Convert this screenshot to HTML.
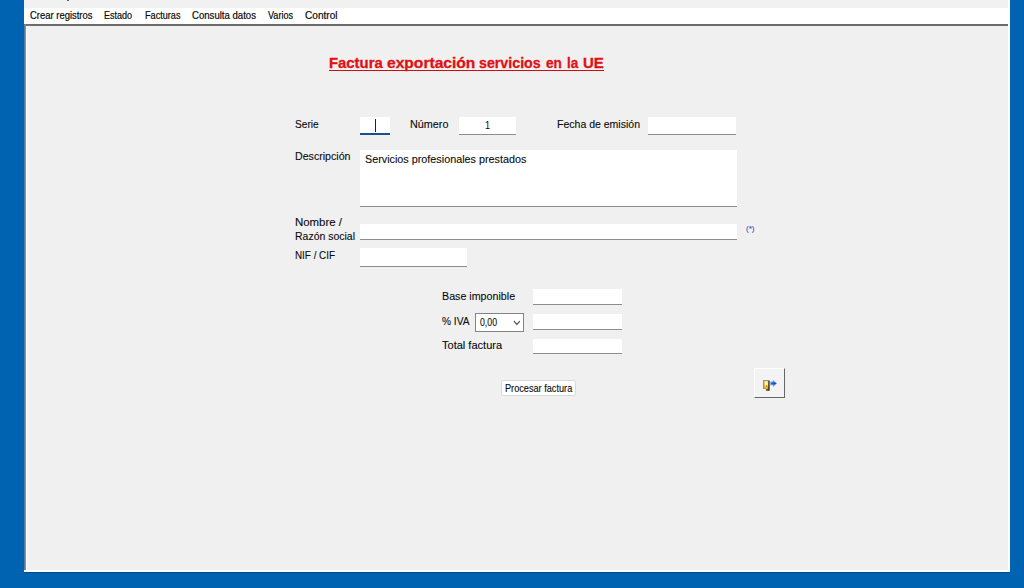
<!DOCTYPE html>
<html lang="es">
<head>
<meta charset="utf-8">
<title>Factura exportación servicios en la UE</title>
<style>
html,body{margin:0;padding:0;}
body{width:1024px;height:588px;overflow:hidden;background:#0063b1;position:relative;font-family:"Liberation Sans",sans-serif;color:#111;}
.abs{position:absolute;}
#win{left:24px;top:0;width:986px;height:571.6px;background:#f0f0f0;}
#strip{left:0;top:0;width:986px;height:8px;background:#f1f1f1;}
#menubar{left:0;top:8px;width:986px;height:16px;background:#fff;}
#menubar span{position:absolute;top:0;line-height:16px;font-size:11px;white-space:nowrap;color:#111;}
#topline{left:0;top:24.1px;width:984px;height:1.5px;background:#6c6c6c;}
#leftline{left:0;top:24px;width:1.7px;height:546.5px;background:linear-gradient(to right,#3d74a8 0%,#8a8a8a 70%,#909090 100%);}
#leftwhite{left:1.7px;top:25.5px;width:1.5px;height:544px;background:#fdfdfb;box-shadow:2px 0 2px #f5f5f8;}
#botwhite{left:0;top:569.8px;width:986px;height:1.8px;background:#fff;}
#rightwhite{left:984.4px;top:0;width:1.6px;height:571.6px;background:#fff;}
#botdark{left:0;top:571.6px;width:986px;height:1.1px;background:#004c8e;}
.lbl{position:absolute;font-size:11px;line-height:14px;white-space:nowrap;color:#111;}
.inp{position:absolute;background:#fff;border-bottom:1.5px solid #8c8c8c;box-sizing:border-box;}
.t{position:absolute;white-space:nowrap;color:#0a0a0a;transform-origin:0 50%;-webkit-text-stroke:0.1px #0a0a0a;}
</style>
</head>
<body>
<div id="win" class="abs">
  <div id="strip" class="abs"></div>
  <div class="abs" style="left:43.4px;top:0;width:1.4px;height:1.3px;background:#333;border-radius:0 0 1px 1px"></div>
  <div id="menubar" class="abs">
  </div>
  <div id="topline" class="abs"></div>
  <div id="leftline" class="abs"></div>
  <div id="leftwhite" class="abs"></div>
  <div id="botwhite" class="abs"></div>
  <div id="rightwhite" class="abs"></div>
  <div id="botdark" class="abs"></div>

  
  <div class="inp" id="i_serie" style="left:336.1px;top:116.5px;width:30.1px;height:18.5px;border-bottom:2px solid #1c4f90"></div>
  <div class="abs" id="caret" style="left:350.5px;top:118.7px;width:1.2px;height:13.3px;background:#222"></div>
  <div class="inp" id="i_num" style="left:434.6px;top:116.6px;width:57.4px;height:18.6px"></div>
  <div class="inp" id="i_fecha" style="left:624px;top:116.6px;width:88.2px;height:18.6px"></div>
  <div class="inp" id="i_desc" style="left:336.2px;top:149.6px;width:376.8px;height:57.3px"></div>
  <div class="inp" id="i_nombre" style="left:336.2px;top:224px;width:376.8px;height:15.5px"></div>
  <div class="inp" id="i_nif" style="left:336.2px;top:248px;width:107.3px;height:18.5px"></div>
  <div class="inp" id="i_base" style="left:509.2px;top:289.3px;width:88.9px;height:15.9px"></div>
  <div class="abs" id="sel" style="left:451px;top:313px;width:49px;height:19px;background:#fff;border:1px solid #848484;box-sizing:border-box">
    
    <svg class="abs" style="left:36.8px;top:6px" width="8" height="6" viewBox="0 0 8 6"><path d="M0.9 1.2 L3.9 4.3 L6.9 1.2" fill="none" stroke="#484848" stroke-width="1.15"/></svg>
  </div>
  <div class="inp" id="i_iva" style="left:509.2px;top:313.8px;width:88.9px;height:16.2px"></div>
  <div class="inp" id="i_total" style="left:509.2px;top:338.8px;width:88.9px;height:15.7px"></div>

  <div class="abs" id="btn" style="left:476.7px;top:379.7px;width:75.6px;height:16.3px;background:#fefefe;border:1px solid #d8d8d8;border-radius:2.5px;box-sizing:border-box">
    
  </div>

  <div class="abs" id="ibtn" style="left:729.5px;top:368.3px;width:31.9px;height:30.2px;background:#f3f3f3;box-sizing:border-box;border-top:1.5px solid #fff;border-left:1.5px solid #fff;border-right:1.9px solid #666;border-bottom:1.7px solid #666">
    <svg class="abs" style="left:6.6px;top:9.1px" width="18" height="14" viewBox="0 0 18 14">
      <defs><linearGradient id="dg" x1="0" y1="0" x2="0" y2="1"><stop offset="0" stop-color="#f3e08a"/><stop offset="0.4" stop-color="#f7dc62"/><stop offset="1" stop-color="#d6a01c"/></linearGradient>
      <linearGradient id="ag" x1="0" y1="0" x2="1" y2="0"><stop offset="0" stop-color="#5a94f0"/><stop offset="1" stop-color="#1d54c8"/></linearGradient></defs>
      <path d="M2.2 2.4 L8.7 2.4 L8.7 12.7 L5.2 12.7 L5.2 11.2 L2.2 10.6 Z" fill="#3e3416"/>
      <path d="M2.3 3 L7.2 3 L7.2 11 L5.6 11.4 L2.3 10.4 Z" fill="url(#dg)"/>
      <path d="M2.2 2.6 L3.2 2.6 L3.2 10.7 L2.2 10.5 Z" fill="#a88a2a"/>
      <path d="M4.4 4.4 L6.4 4.4 L6.4 7 L4.4 7 Z" fill="#fffbe6" opacity="0.9"/>
      <path d="M5 7.6 L6.4 7.6 L6.4 9 L5 9 Z" fill="#c8901a"/>
      <path d="M9.3 3.7 L12 3.7 L12 2.2 L15.9 5.4 L12 8.6 L12 7.1 L9.3 7.1 Z" fill="url(#ag)" stroke="#9cc0f5" stroke-width="0.5"/>
      <path d="M10 5.4 L15 5.4" stroke="#1748b0" stroke-width="0.8"/>
    </svg>
  </div>
<div class="abs" id="uline" style="left:304.5px;top:69.75px;width:275.7px;height:1.1px;background:#c81014"></div>
<div class="t" id="m1" style="left:5.50px;top:5.82px;font-size:10.2px;line-height:20.4px;transform:scaleX(0.9276);-webkit-text-stroke:0.2px #0a0a0a;">Crear registros</div>
<div class="t" id="m2" style="left:80.00px;top:5.82px;font-size:10.2px;line-height:20.4px;transform:scaleX(0.8828);-webkit-text-stroke:0.2px #0a0a0a;">Estado</div>
<div class="t" id="m3" style="left:120.50px;top:5.82px;font-size:10.2px;line-height:20.4px;transform:scaleX(0.8955);-webkit-text-stroke:0.2px #0a0a0a;">Facturas</div>
<div class="t" id="m4" style="left:168.00px;top:5.82px;font-size:10.2px;line-height:20.4px;transform:scaleX(0.9416);-webkit-text-stroke:0.2px #0a0a0a;">Consulta datos</div>
<div class="t" id="m5" style="left:244.00px;top:5.82px;font-size:10.2px;line-height:20.4px;transform:scaleX(0.8889);-webkit-text-stroke:0.2px #0a0a0a;">Varios</div>
<div class="t" id="m6" style="left:281.00px;top:5.82px;font-size:10.2px;line-height:20.4px;transform:scaleX(0.9895);-webkit-text-stroke:0.2px #0a0a0a;">Control</div>
<div class="t" id="tw1" style="left:304.60px;top:49.08px;font-size:14.2px;line-height:28.4px;transform:scaleX(1.0478);-webkit-text-stroke:0.3px #e01014;font-weight:bold;color:#e01014;">Factura</div>
<div class="t" id="tw2" style="left:362.70px;top:49.08px;font-size:14.2px;line-height:28.4px;transform:scaleX(1.0992);-webkit-text-stroke:0.3px #e01014;font-weight:bold;color:#e01014;">exportación</div>
<div class="t" id="tw3" style="left:455.30px;top:49.08px;font-size:14.2px;line-height:28.4px;transform:scaleX(1.0027);-webkit-text-stroke:0.3px #e01014;font-weight:bold;color:#e01014;">servicios</div>
<div class="t" id="tw4" style="left:521.60px;top:49.08px;font-size:14.2px;line-height:28.4px;transform:scaleX(0.9600);-webkit-text-stroke:0.3px #e01014;font-weight:bold;color:#e01014;">en</div>
<div class="t" id="tw5" style="left:543.10px;top:49.08px;font-size:14.2px;line-height:28.4px;transform:scaleX(0.9541);-webkit-text-stroke:0.3px #e01014;font-weight:bold;color:#e01014;">la</div>
<div class="t" id="tw6" style="left:559.20px;top:49.08px;font-size:14.2px;line-height:28.4px;transform:scaleX(1.0548);-webkit-text-stroke:0.3px #e01014;font-weight:bold;color:#e01014;">UE</div>
<div class="t" id="l_serie" style="left:270.50px;top:112.69px;font-size:11px;line-height:22px;transform:scaleX(0.9226);">Serie</div>
<div class="t" id="l_num" style="left:385.50px;top:112.69px;font-size:11px;line-height:22px;transform:scaleX(0.9840);">Número</div>
<div class="t" id="t_num" style="left:461.20px;top:116.27px;font-size:10.2px;line-height:20.4px;transform:scaleX(0.8992);-webkit-text-stroke:0;">1</div>
<div class="t" id="l_fecha" style="left:533.00px;top:112.69px;font-size:11px;line-height:22px;transform:scaleX(0.9559);">Fecha de emisión</div>
<div class="t" id="l_desc" style="left:270.50px;top:145.49px;font-size:11px;line-height:22px;transform:scaleX(0.9657);">Descripción</div>
<div class="t" id="t_desc" style="left:340.70px;top:148.09px;font-size:11px;line-height:22px;transform:scaleX(0.9806);">Servicios profesionales prestados</div>
<div class="t" id="l_nombre" style="left:270.50px;top:211.09px;font-size:11px;line-height:22px;transform:scaleX(1.0387);">Nombre /</div>
<div class="t" id="l_razon" style="left:270.50px;top:224.89px;font-size:11px;line-height:22px;transform:scaleX(0.9526);">Razón social</div>
<div class="t" id="l_ast" style="left:722.00px;top:220.70px;font-size:7.5px;line-height:15.0px;transform:scaleX(1.0730);color:#3c50cc;-webkit-text-stroke:0.1px #3c50cc;">(*)</div>
<div class="t" id="l_nif" style="left:270.50px;top:243.89px;font-size:11px;line-height:22px;transform:scaleX(0.8967);">NIF / CIF</div>
<div class="t" id="l_base" style="left:417.90px;top:285.19px;font-size:11px;line-height:22px;transform:scaleX(0.9718);">Base imponible</div>
<div class="t" id="l_iva" style="left:418.00px;top:310.19px;font-size:11px;line-height:22px;transform:scaleX(0.9239);">% IVA</div>
<div class="t" id="t_sel" style="left:456.00px;top:311.56px;font-size:10.5px;line-height:21.0px;transform:scaleX(0.8318);">0,00</div>
<div class="t" id="l_total" style="left:417.90px;top:334.39px;font-size:11px;line-height:22px;transform:scaleX(1.0030);">Total factura</div>
<div class="t" id="t_btn" style="left:480.75px;top:378.54px;font-size:10px;line-height:20px;transform:scaleX(0.9165);">Procesar factura</div>
</div>
</body>
</html>
